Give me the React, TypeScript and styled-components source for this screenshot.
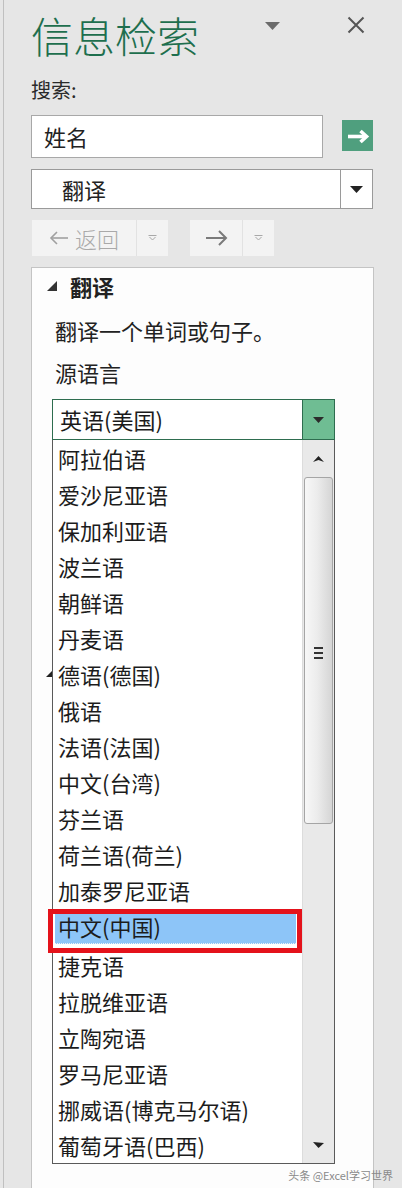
import React from "react";
import styled, { createGlobalStyle, css } from "styled-components";

const FONT = `"Noto Sans CJK SC", "Noto Sans", "Liberation Sans", sans-serif`;

const Global = createGlobalStyle`
  html, body { margin: 0; padding: 0; background: #e6e6e6; }
  #root { width: 402px; height: 1188px; }
`;

const Root = styled.div`
  position: relative;
  width: 402px;
  height: 1188px;
  overflow: hidden;
  background: #e6e6e6;
  font-family: ${FONT};
  color: #222;
`;

const Frame = styled.div`
  box-sizing: border-box;
  height: 100%;
  margin-left: 3px;
  border-left: 1px solid #c0c0c0;
  padding-left: 27px;
  display: flex;
  flex-direction: column;
`;

const Header = styled.div`
  display: flex;
  align-items: flex-start;
  width: 342px;
  margin-top: 8px;
  height: 54px;
`;

const Title = styled.h1`
  margin: 0;
  font-size: 42px;
  line-height: 54px;
  font-weight: 300;
  color: #1e6f4e;
  letter-spacing: 0px;
`;

const HeaderIcon = styled.div<{ $ml: number; $mt: number }>`
  margin-left: ${(p) => p.$ml}px;
  margin-top: ${(p) => p.$mt}px;
  display: flex;
`;

const Label = styled.div`
  margin-top: 14px;
  font-size: 20px;
  line-height: 28px;
  color: #2a2a2a;
`;

const SearchRow = styled.div`
  display: flex;
  align-items: center;
  margin-top: 11px;
  width: 342px;
`;

const SearchInput = styled.div`
  box-sizing: border-box;
  width: 292px;
  height: 43px;
  background: #fff;
  border: 1px solid #a8a8a8;
  padding-left: 12px;
  font-size: 22px;
  line-height: 40px;
  color: #222;
`;

const GoButton = styled.div`
  margin-left: 19px;
  margin-top: -2px;
  width: 31px;
  height: 31px;
  background: #4f9f7e;
  display: flex;
  align-items: center;
  justify-content: center;
`;

const Combo = styled.div`
  box-sizing: border-box;
  margin-top: 11px;
  width: 342px;
  height: 40px;
  background: #fff;
  border: 1px solid #9a9a9a;
  display: flex;
`;

const ComboText = styled.div`
  flex: 1;
  padding-left: 30px;
  font-size: 22px;
  line-height: 38px;
  color: #222;
`;

const ComboButton = styled.div`
  width: 31px;
  border-left: 1px solid #9a9a9a;
  display: flex;
  align-items: center;
  justify-content: center;
`;

const NavRow = styled.div`
  display: flex;
  margin-top: 11px;
  margin-left: 1px;
  height: 36px;
  gap: 22px;
`;

const NavButton = styled.div`
  display: flex;
  background: #f3f3f3;
  height: 36px;
`;

const NavMain = styled.div<{ $w: number }>`
  width: ${(p) => p.$w}px;
  display: flex;
  align-items: center;
  justify-content: center;
  gap: 6px;
  font-size: 22px;
  font-weight: 300;
  color: #a9a9a9;
`;

const NavDrop = styled.div`
  width: 31px;
  border-left: 1px solid #e2e2e2;
  display: flex;
  align-items: center;
  justify-content: center;
`;

const Panel = styled.div`
  position: relative;
  box-sizing: border-box;
  margin-top: 11px;
  width: 343px;
  flex: 1;
  background: #fdfdfd;
  border: 1px solid #c4c4c4;
  border-bottom: none;
  padding-left: 15px;
`;

const SectionHead = styled.div`
  display: flex;
  align-items: center;
  gap: 13px;
  height: 36px;
  font-size: 22px;
  font-weight: 700;
  color: #222;
`;

const Desc = styled.div<{ $mt: number }>`
  margin-top: ${(p) => p.$mt}px;
  padding-left: 8px;
  font-size: 22px;
  line-height: 32px;
  color: #222;
`;

const LangBox = styled.div`
  position: relative;
  z-index: 2;
  margin-top: 11px;
  margin-left: 5px;
  width: 283px;
`;

const LangSelect = styled.div`
  box-sizing: border-box;
  height: 41px;
  display: flex;
  background: #fff;
  border: 1px solid #2e6d4f;
`;

const LangValue = styled.div`
  flex: 1;
  padding-left: 7px;
  font-size: 22px;
  line-height: 38px;
  color: #1a1a1a;
`;

const LangButton = styled.div`
  width: 31px;
  background: #6fbd93;
  border-left: 1px solid #2e6d4f;
  display: flex;
  align-items: center;
  justify-content: center;
`;

const ListBox = styled.div`
  box-sizing: border-box;
  display: flex;
  background: #fff;
  border: 1px solid #5a5a5a;
  border-top: none;
`;

const Items = styled.ul`
  flex: 1;
  margin: 0;
  padding: 0;
  list-style: none;
`;

const Item = styled.li<{ $selected?: boolean }>`
  position: relative;
  height: 36px;
  font-size: 22px;
  line-height: 36px;
  color: #1c1c1c;
  white-space: nowrap;
  ${(p) =>
    p.$selected &&
    css`
      z-index: 1;
    `}
`;

const ItemText = styled.div<{ $selected?: boolean }>`
  padding-left: 5px;
  height: 36px;
  ${(p) =>
    p.$selected &&
    css`
      box-sizing: border-box;
      margin: 0 6px 0 2px;
      padding-left: 3px;
      height: 33px;
      margin-top: 3px;
      line-height: 30px;
      background: #8dc5f8;
      border-bottom: 1px dotted #e9f2fb;
    `}
`;

const RedMark = styled.div`
  position: absolute;
  left: -5px;
  right: 0;
  top: -2px;
  bottom: -6px;
  border: 5px solid #e4121b;
  pointer-events: none;
`;

const ScrollTrack = styled.div`
  width: 31px;
  background: #e9e9e9;
  border-left: 1px solid #dcdcdc;
  display: flex;
  flex-direction: column;
  align-items: center;
`;

const ScrollArrow = styled.div`
  height: 37px;
  display: flex;
  align-items: center;
  justify-content: center;
`;

const Thumb = styled.div`
  box-sizing: border-box;
  width: 29px;
  height: 347px;
  border: 1px solid #a5a5a5;
  border-radius: 3px;
  background: linear-gradient(to right, #f7f7f7 0%, #ececec 45%, #d5d5d5 100%);
  display: flex;
  align-items: center;
  justify-content: center;
`;

const Grip = styled.div`
  display: flex;
  flex-direction: column;
  gap: 3px;
  margin-top: 4px;
`;

const GripLine = styled.span`
  display: block;
  width: 9px;
  height: 2px;
  background: #333;
`;

const TrackFill = styled.div`
  flex: 1;
`;

const HiddenTri = styled.div`
  position: absolute;
  left: 14px;
  top: 403px;
  z-index: 1;
  display: flex;
`;

const Watermark = styled.div`
  position: absolute;
  right: 9px;
  bottom: 7px;
  font-size: 11px;
  line-height: 12px;
  color: #8a8a8a;
  font-family: ${FONT};
  z-index: 3;
`;

const languages = [
  "阿拉伯语",
  "爱沙尼亚语",
  "保加利亚语",
  "波兰语",
  "朝鲜语",
  "丹麦语",
  "德语(德国)",
  "俄语",
  "法语(法国)",
  "中文(台湾)",
  "芬兰语",
  "荷兰语(荷兰)",
  "加泰罗尼亚语",
  "中文(中国)",
  "捷克语",
  "拉脱维亚语",
  "立陶宛语",
  "罗马尼亚语",
  "挪威语(博克马尔语)",
  "葡萄牙语(巴西)",
];

const SmallDrop = () => (
  <svg width="9" height="6" viewBox="0 0 9 6">
    <path d="M0.5 0.5 H8.5" stroke="#a8a8a8" strokeWidth="1" />
    <path d="M1.5 2 L4.5 5 L7.5 2" stroke="#a8a8a8" strokeWidth="1" fill="none" />
  </svg>
);

export default function App() {
  return (
    <Root>
      <Global />
      <Frame>
        <Header>
          <Title>信息检索</Title>
          <HeaderIcon $ml={66} $mt={14}>
            <svg width="15" height="8" viewBox="0 0 15 8">
              <polygon points="0,0 15,0 7.5,8" fill="#6b6b6b" />
            </svg>
          </HeaderIcon>
          <HeaderIcon $ml={67} $mt={8}>
            <svg width="18" height="18" viewBox="0 0 18 18">
              <path d="M1.5 1.5 L16.5 16.5 M16.5 1.5 L1.5 16.5" stroke="#555" strokeWidth="2" />
            </svg>
          </HeaderIcon>
        </Header>
        <Label>搜索:</Label>
        <SearchRow>
          <SearchInput>姓名</SearchInput>
          <GoButton>
            <svg width="31" height="31" viewBox="0 0 31 31">
              <path d="M6 16.5 H23" stroke="#fff" strokeWidth="3.6" />
              <path d="M18.5 11 L24.5 16.5 L18.5 22" stroke="#fff" strokeWidth="3.6" fill="none" />
            </svg>
          </GoButton>
        </SearchRow>
        <Combo>
          <ComboText>翻译</ComboText>
          <ComboButton>
            <svg width="13" height="7" viewBox="0 0 13 7">
              <polygon points="0,0 13,0 6.5,7" fill="#222" />
            </svg>
          </ComboButton>
        </Combo>
        <NavRow>
          <NavButton>
            <NavMain $w={104}>
              <svg width="20" height="14" viewBox="0 0 20 14">
                <path d="M2 7 H19" stroke="#a0a0a0" strokeWidth="1.6" />
                <path d="M8 1 L2 7 L8 13" stroke="#a0a0a0" strokeWidth="1.6" fill="none" />
              </svg>
              <span>返回</span>
            </NavMain>
            <NavDrop>
              <SmallDrop />
            </NavDrop>
          </NavButton>
          <NavButton>
            <NavMain $w={52}>
              <svg width="23" height="16" viewBox="0 0 23 16">
                <path d="M1 8 H21" stroke="#7a7a7a" strokeWidth="2" />
                <path d="M14 1 L21 8 L14 15" stroke="#7a7a7a" strokeWidth="2" fill="none" />
              </svg>
            </NavMain>
            <NavDrop>
              <SmallDrop />
            </NavDrop>
          </NavButton>
        </NavRow>
        <Panel>
          <SectionHead>
            <svg width="10" height="10" viewBox="0 0 10 10">
              <polygon points="10,0 10,10 0,10" fill="#333" />
            </svg>
            <span>翻译</span>
          </SectionHead>
          <Desc $mt={10}>翻译一个单词或句子。</Desc>
          <Desc $mt={10}>源语言</Desc>
          <HiddenTri>
            <svg width="6" height="6" viewBox="0 0 6 6">
              <polygon points="6,0 6,6 0,6" fill="#222" />
            </svg>
          </HiddenTri>
          <LangBox>
            <LangSelect>
              <LangValue>英语(美国)</LangValue>
              <LangButton>
                <svg width="11" height="6" viewBox="0 0 11 6">
                  <polygon points="0,0 11,0 5.5,6" fill="#2b2b2b" />
                </svg>
              </LangButton>
            </LangSelect>
            <ListBox>
              <Items>
                {languages.map((l) => {
                  const sel = l === "中文(中国)";
                  return (
                    <Item key={l} $selected={sel}>
                      <ItemText $selected={sel}>{l}</ItemText>
                      {sel && <RedMark />}
                    </Item>
                  );
                })}
              </Items>
              <ScrollTrack>
                <ScrollArrow>
                  <svg width="11" height="6" viewBox="0 0 11 6">
                    <polygon points="5.5,0 11,6 5.5,4 0,6" fill="#222" />
                  </svg>
                </ScrollArrow>
                <Thumb>
                  <Grip>
                    <GripLine />
                    <GripLine />
                    <GripLine />
                  </Grip>
                </Thumb>
                <TrackFill />
                <ScrollArrow>
                  <svg width="11" height="6" viewBox="0 0 11 6">
                    <polygon points="0,0 11,1 5.5,6" fill="#222" />
                  </svg>
                </ScrollArrow>
              </ScrollTrack>
            </ListBox>
          </LangBox>
        </Panel>
      </Frame>
      <Watermark>头条 @Excel学习世界</Watermark>
    </Root>
  );
}
